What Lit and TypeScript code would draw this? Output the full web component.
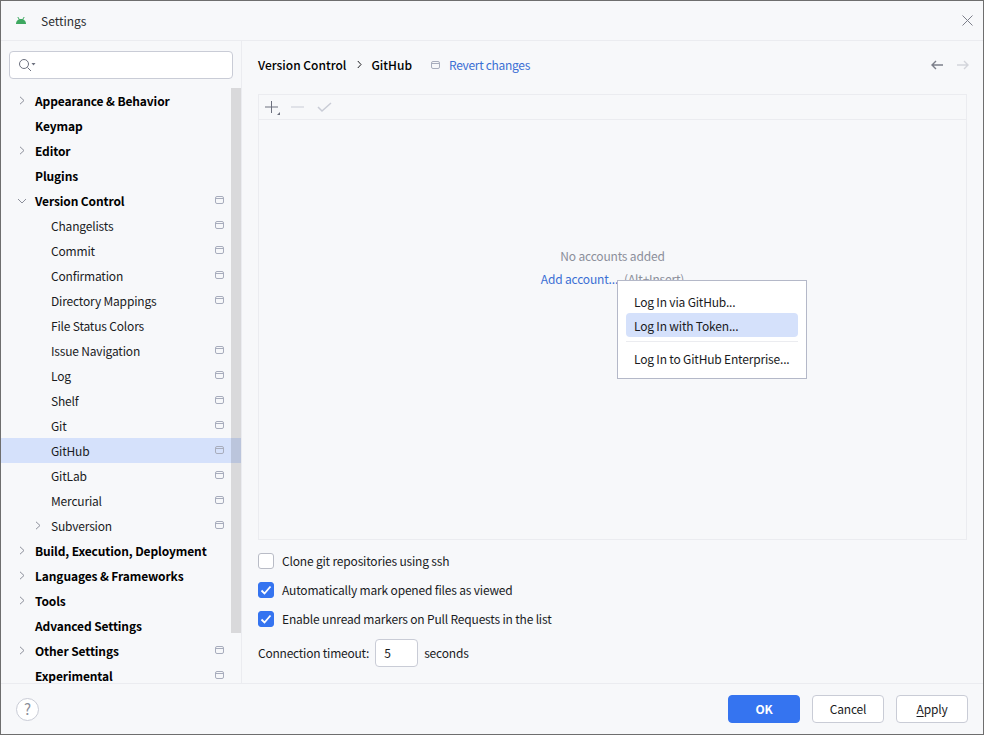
import { LitElement, html, css } from "lit";
import { customElement } from "lit/decorators.js";

type Row = { t: string; lvl: 0 | 1; arrow?: "r" | "d"; mod?: boolean; sel?: boolean };
const rows: Row[] = [
  { t: "Appearance & Behavior", lvl: 0, arrow: "r" },
  { t: "Keymap", lvl: 0 },
  { t: "Editor", lvl: 0, arrow: "r" },
  { t: "Plugins", lvl: 0 },
  { t: "Version Control", lvl: 0, arrow: "d", mod: true },
  { t: "Changelists", lvl: 1, mod: true },
  { t: "Commit", lvl: 1, mod: true },
  { t: "Confirmation", lvl: 1, mod: true },
  { t: "Directory Mappings", lvl: 1, mod: true },
  { t: "File Status Colors", lvl: 1 },
  { t: "Issue Navigation", lvl: 1, mod: true },
  { t: "Log", lvl: 1, mod: true },
  { t: "Shelf", lvl: 1, mod: true },
  { t: "Git", lvl: 1, mod: true },
  { t: "GitHub", lvl: 1, mod: true, sel: true },
  { t: "GitLab", lvl: 1, mod: true },
  { t: "Mercurial", lvl: 1, mod: true },
  { t: "Subversion", lvl: 1, arrow: "r", mod: true },
  { t: "Build, Execution, Deployment", lvl: 0, arrow: "r" },
  { t: "Languages & Frameworks", lvl: 0, arrow: "r" },
  { t: "Tools", lvl: 0, arrow: "r" },
  { t: "Advanced Settings", lvl: 0 },
  { t: "Other Settings", lvl: 0, arrow: "r", mod: true },
  { t: "Experimental", lvl: 0, mod: true },
];

const modIcon = html`<svg class="mod" width="9" height="8" viewBox="0 0 9 8" fill="none" stroke="#a8adbd">
  <rect x="0.5" y="0.5" width="8" height="7" rx="1.5"></rect><path d="M0.5 2.5H8.5"></path></svg>`;
const chevR = html`<svg width="6" height="9" viewBox="0 0 6 9" fill="none" stroke="#8c8f9a"><path d="M1 0.8L5 4.5L1 8.2"></path></svg>`;
const chevD = html`<svg width="10" height="6" viewBox="0 0 10 6" fill="none" stroke="#8c8f9a"><path d="M1 1L5 5L9 1"></path></svg>`;
const check = html`<svg width="12" height="12" viewBox="0 0 12 12" fill="none" stroke="#fff" stroke-width="1.8"><path d="M1.5 6.5L4.5 9.5L10.5 2.5"></path></svg>`;

@customElement("app-root")
export class AppRoot extends LitElement {
  static styles = css`
    :host {
      display: block;
    }
    * {
      box-sizing: border-box;
    }
    .win {
      position: relative;
      width: 984px;
      height: 735px;
      display: flex;
      flex-direction: column;
      background: #f7f8fa;
      border: 1px solid #6e6e6e;
      font: 12px/18px "Noto Sans CJK KR", "Noto Sans", sans-serif;
      letter-spacing: -0.18px;
      color: #1a1b1e;
      overflow: hidden;
    }
    .title {
      height: 40px;
      flex: none;
      display: flex;
      align-items: center;
      border-bottom: 1px solid #ebecf0;
      padding-left: 15px;
    }
    .logo {
      margin-top: -1px;
    }
    .title .name {
      margin-left: 15px;
      color: #2b2d30;
      letter-spacing: 0;
    }
    .close {
      margin-left: auto;
      margin-right: 10px;
      display: flex;
    }
    .body {
      flex: 1;
      display: flex;
      min-height: 0;
    }
    .side {
      width: 241px;
      flex: none;
      border-right: 1px solid #ebecf0;
      display: flex;
      flex-direction: column;
      position: relative;
    }
    .search {
      margin: 10px 8px 0 8px;
      height: 28px;
      flex: none;
      background: #fff;
      border: 1px solid #c9ccd6;
      border-radius: 4px;
      display: flex;
      align-items: center;
      padding-left: 8px;
    }
    .tree {
      margin-top: 9px;
      flex: 1;
      min-height: 0;
      overflow: hidden;
    }
    .row {
      height: 25px;
      position: relative;
      display: flex;
      align-items: center;
      padding-right: 17px;
    }
    .row.sel {
      background: #d5e1fb;
    }
    .row .txt {
      flex: 1;
      white-space: nowrap;
    }
    .l0 .txt {
      padding-left: 34px;
      font-weight: 700;
      color: #000;
      letter-spacing: -0.12px;
    }
    .l1 .txt {
      padding-left: 50px;
    }
    .arrow {
      position: absolute;
      top: 0;
      height: 25px;
      display: flex;
      align-items: center;
      justify-content: center;
      width: 10px;
    }
    .l0 .arrow {
      left: 16px;
    }
    .l1 .arrow {
      left: 32px;
    }
    .mod {
      display: block;
      flex: none;
    }
    .row .mod {
      margin-top: -1px;
    }
    .scroll {
      position: absolute;
      right: 0;
      top: 47px;
      width: 10px;
      height: 545px;
      background: rgba(0, 0, 0, 0.12);
    }
    .main {
      flex: 1;
      min-width: 0;
      display: flex;
      flex-direction: column;
      padding: 0 16px;
    }
    .crumbs {
      height: 53px;
      flex: none;
      display: flex;
      align-items: center;
      padding-bottom: 6px;
      font-weight: 500;
      color: #000;
      letter-spacing: 0;
    }
    .crumbs .sep {
      margin: 0 9px 0 11px;
      display: flex;
    }
    .crumbs .rev {
      display: flex;
      align-items: center;
      margin-left: 19px;
      font-weight: 400;
      color: #3b6fd4;
      gap: 9px;
      letter-spacing: -0.3px;
    }
    .nav {
      margin-left: auto;
      display: flex;
      gap: 14px;
      margin-right: -2px;
    }
    .panel {
      height: 446px;
      flex: none;
      border: 1px solid #ebecf0;
      display: flex;
      flex-direction: column;
    }
    .tools {
      height: 25px;
      flex: none;
      border-bottom: 1px solid #ebecf0;
      display: flex;
      align-items: center;
      padding-left: 4px;
      gap: 8px;
    }
    .empty {
      flex: 1;
      display: flex;
      flex-direction: column;
      align-items: center;
      padding-top: 127px;
      gap: 5px;
    }
    .empty .none {
      color: #8c8f9a;
    }
    .empty .add {
      color: #8c8f9a;
      display: flex;
      gap: 6px;
    }
    .empty a {
      color: #3b6fd4;
    }
    .opts {
      display: flex;
      flex-direction: column;
      padding-top: 6px;
    }
    .opt {
      height: 29px;
      display: flex;
      align-items: center;
      gap: 8px;
    }
    .cb {
      width: 16px;
      height: 16px;
      border-radius: 3px;
      border: 1px solid #b9bcc6;
      background: #fff;
      display: flex;
      align-items: center;
      justify-content: center;
    }
    .cb.on {
      background: #3574f0;
      border-color: #3574f0;
    }
    .timeout {
      margin-top: 6px;
      height: 28px;
      display: flex;
      align-items: center;
      gap: 6px;
    }
    .timeout .lbl {
      letter-spacing: -0.23px;
    }
    .field {
      width: 43px;
      height: 28px;
      background: #fff;
      border: 1px solid #c9ccd6;
      border-radius: 4px;
      padding-left: 8px;
      line-height: 26px;
    }
    .foot {
      height: 51px;
      flex: none;
      border-top: 1px solid #ebecf0;
      display: flex;
      align-items: center;
      padding: 0 15px;
    }
    .help {
      width: 23px;
      height: 23px;
      border-radius: 50%;
      border: 1px solid #c9ccd6;
      background: #fff;
      color: #8c8f9a;
      font-size: 15px;
      display: flex;
      align-items: center;
      justify-content: center;
    }
    .btns {
      margin-left: auto;
      display: flex;
      gap: 12px;
    }
    .btn {
      width: 72px;
      height: 28px;
      border-radius: 4px;
      border: 1px solid #c9ccd6;
      background: #fff;
      display: flex;
      align-items: center;
      justify-content: center;
    }
    .btn.pri {
      background: #3574f0;
      border-color: #3574f0;
      color: #fff;
      font-weight: 700;
    }
    .btn u {
      text-underline-offset: 2px;
    }
    .menu {
      position: absolute;
      left: 616px;
      top: 279px;
      width: 190px;
      height: 99px;
      background: #fff;
      border: 1px solid #b4b8c8;
      padding: 8px;
    }
    .mi {
      height: 24px;
      display: flex;
      align-items: center;
      padding: 2px 0 0 8px;
      border-radius: 4px;
      white-space: nowrap;
    }
    .mi.hi {
      background: #d5e1fb;
    }
    .msep {
      height: 1px;
      background: #ebecf0;
      margin: 4px 0;
    }
  `;

  render() {
    return html`<div class="win">
      <div class="title">
        <svg class="logo" width="10" height="7" viewBox="0 0 10 7" fill="#3ea860"><path d="M0 7C0 4 2 2 5 2s5 2 5 5Z"></path><path d="M1.8 0L3.4 2.6M8.2 0L6.6 2.6" stroke="#3ea860" stroke-width="1"></path></svg>
        <span class="name">Settings</span>
        <span class="close"><svg width="11" height="11" viewBox="0 0 11 11" stroke="#7c7f8a" stroke-width="1"><path d="M0.5 0.5L10.5 10.5M10.5 0.5L0.5 10.5"></path></svg></span>
      </div>
      <div class="body">
        <div class="side">
          <div class="search">
            <svg width="18" height="14" viewBox="0 0 18 14" fill="none" stroke="#6c707e"><circle cx="6" cy="6" r="4.5"></circle><path d="M9.5 9.5L13 13"></path><path d="M13.5 5h4l-2 2.5Z" fill="#6c707e" stroke="none"></path></svg>
          </div>
          <div class="tree">
            ${rows.map(
              (r) => html`<div class="row l${r.lvl} ${r.sel ? "sel" : ""}">
                ${r.arrow ? html`<span class="arrow">${r.arrow === "r" ? chevR : chevD}</span>` : ""}
                <span class="txt">${r.t}</span>
                ${r.mod ? modIcon : ""}
              </div>`
            )}
          </div>
          <div class="scroll"></div>
        </div>
        <div class="main">
          <div class="crumbs">
            <span>Version Control</span>
            <span class="sep"><svg width="5" height="9" viewBox="0 0 5 9" fill="none" stroke="#1e1f22"><path d="M0.8 1L4 4.5L0.8 8"></path></svg></span>
            <span>GitHub</span>
            <span class="rev">${modIcon}<span>Revert changes</span></span>
            <span class="nav">
              <svg width="12" height="10" viewBox="0 0 12 10" fill="none" stroke="#7c7f8a" stroke-width="1.4"><path d="M1 5H12M5 1L1 5L5 9"></path></svg>
              <svg width="12" height="10" viewBox="0 0 12 10" fill="none" stroke="#d3d5db" stroke-width="1.4"><path d="M0 5H11M7 1L11 5L7 9"></path></svg>
            </span>
          </div>
          <div class="panel">
            <div class="tools">
              <svg width="18" height="18" viewBox="0 0 18 18" fill="none" stroke="#6c707e"><path d="M8.5 3V15M2 9H15"></path><path d="M17 14v3h-3Z" fill="#6c707e" stroke="none"></path></svg>
              <svg width="16" height="18" viewBox="0 0 16 18" fill="none" stroke="#c9ccd6"><path d="M2 9H15"></path></svg>
              <svg width="20" height="18" viewBox="0 0 20 18" fill="none" stroke="#c9ccd6" stroke-width="1.5"><path d="M5 9L9 13L18 5"></path></svg>
            </div>
            <div class="empty">
              <div class="none">No accounts added</div>
              <div class="add"><a>Add account...</a><span>(Alt+Insert)</span></div>
            </div>
          </div>
          <div class="opts">
            <label class="opt"><span class="cb"></span>Clone git repositories using ssh</label>
            <label class="opt"><span class="cb on">${check}</span>Automatically mark opened files as viewed</label>
            <label class="opt"><span class="cb on">${check}</span>Enable unread markers on Pull Requests in the list</label>
          </div>
          <div class="timeout"><span class="lbl">Connection timeout:</span><span class="field">5</span><span>seconds</span></div>
        </div>
      </div>
      <div class="foot">
        <div class="help">?</div>
        <div class="btns">
          <div class="btn pri">OK</div>
          <div class="btn">Cancel</div>
          <div class="btn"><span><u>A</u>pply</span></div>
        </div>
      </div>
      <div class="menu">
        <div class="mi">Log In via GitHub...</div>
        <div class="mi hi">Log In with Token...</div>
        <div class="msep"></div>
        <div class="mi">Log In to GitHub Enterprise...</div>
      </div>
    </div>`;
  }
}
